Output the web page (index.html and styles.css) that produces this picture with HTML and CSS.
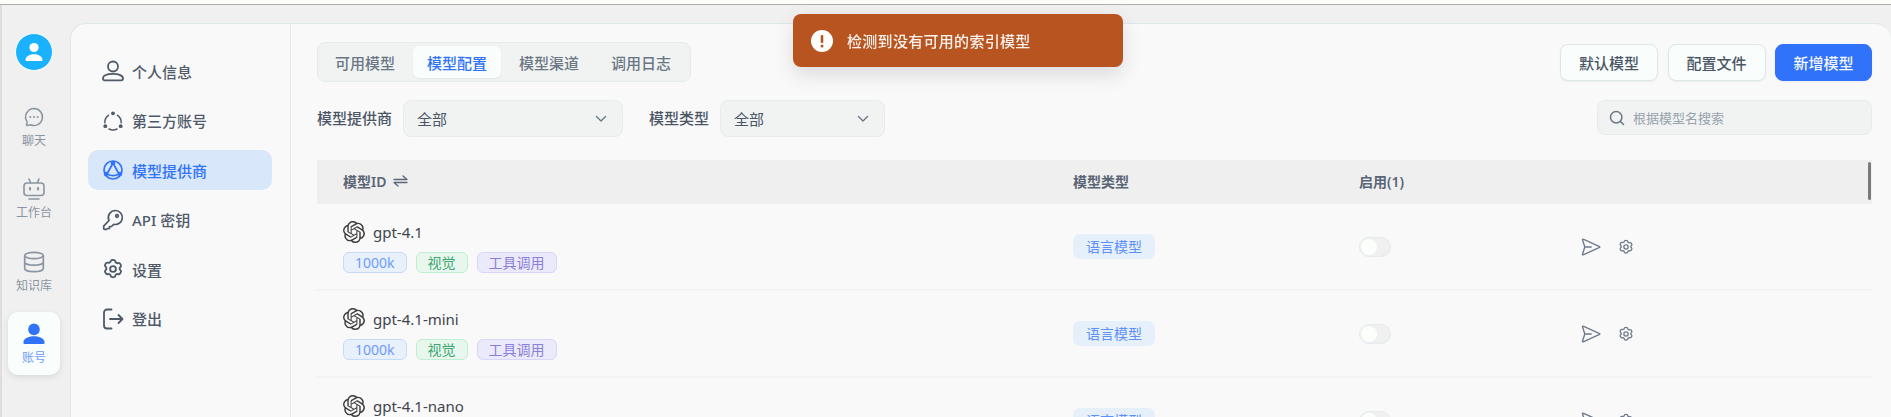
FILE: index.html
```html
<!DOCTYPE html>
<html lang="zh-CN">
<head>
    <meta charset="UTF-8">
    <meta name="viewport" content="width=device-width, initial-scale=1.0">
    <title>模型配置</title>
    <link rel="stylesheet" href="styles.css">
</head>
<body>
    <svg class="icon-defs" width="0" height="0">
        <symbol id="i-openai" viewBox="0 0 24 24">
            <path fill="currentColor" d="M22.2819 9.8211a5.9847 5.9847 0 0 0-.5157-4.9108 6.0462 6.0462 0 0 0-6.5098-2.9A6.0651 6.0651 0 0 0 4.9807 4.1818a5.9847 5.9847 0 0 0-3.9977 2.9 6.0462 6.0462 0 0 0 .7427 7.0966 5.98 5.98 0 0 0 .511 4.9107 6.051 6.051 0 0 0 6.5146 2.9001A5.9847 5.9847 0 0 0 13.2599 24a6.0557 6.0557 0 0 0 5.7718-4.2058 5.9894 5.9894 0 0 0 3.9977-2.9001 6.0557 6.0557 0 0 0-.7475-7.0729zm-9.022 12.6081a4.4755 4.4755 0 0 1-2.8764-1.0408l.1419-.0804 4.7783-2.7582a.7948.7948 0 0 0 .3927-.6813v-6.7369l2.02 1.1686a.071.071 0 0 1 .038.052v5.5826a4.504 4.504 0 0 1-4.4945 4.4944zm-9.6607-4.1254a4.4708 4.4708 0 0 1-.5346-3.0137l.142.0852 4.783 2.7582a.7712.7712 0 0 0 .7806 0l5.8428-3.3685v2.3324a.0804.0804 0 0 1-.0332.0615L9.74 19.9502a4.4992 4.4992 0 0 1-6.1408-1.6464zM2.3408 7.8956a4.485 4.485 0 0 1 2.3655-1.9728V11.6a.7664.7664 0 0 0 .3879.6765l5.8144 3.3543-2.0201 1.1685a.0757.0757 0 0 1-.071 0l-4.8303-2.7865A4.504 4.504 0 0 1 2.3408 7.872zm16.5963 3.8558L13.1038 8.364 15.1192 7.2a.0757.0757 0 0 1 .071 0l4.8303 2.7913a4.4944 4.4944 0 0 1-.6765 8.1042v-5.6772a.79.79 0 0 0-.407-.667zm2.0107-3.0231l-.142-.0852-4.7735-2.7818a.7759.7759 0 0 0-.7854 0L9.409 9.2297V6.8974a.0662.0662 0 0 1 .0284-.0615l4.8303-2.7866a4.4992 4.4992 0 0 1 6.6802 4.66zM8.3065 12.863l-2.02-1.1638a.0804.0804 0 0 1-.038-.0567V6.0742a4.4992 4.4992 0 0 1 7.3757-3.4537l-.142.0805L8.704 5.459a.7948.7948 0 0 0-.3927.6813zm1.0976-2.3654l2.602-1.4998 2.6069 1.4998v2.9994l-2.5974 1.4997-2.6067-1.4997Z"/>
        </symbol>
        <symbol id="i-send" viewBox="0 0 20 20">
            <path fill="none" stroke="currentColor" stroke-width="1.4" stroke-linejoin="round" stroke-linecap="round" d="M2.2 2.2 18.6 9.6a.5.5 0 0 1 0 .8L2.2 17.8a.5.5 0 0 1-.7-.6L3.8 10 1.500 2.800a.5.5 0 0 1 .7-.6ZM3.800 10h6.400"/>
        </symbol>
        <symbol id="i-gear" viewBox="0 0 24 24">
            <g fill="none" stroke="currentColor" stroke-width="2" stroke-linejoin="round">
                <path d="M9.600 3.300a1.500 1.500 0 0 1 1-.9l.9-.2a2 2 0 0 1 1 0l.9.2a1.500 1.500 0 0 1 1 .9l.5 1.500 1.500.9 1.600-.3a1.500 1.500 0 0 1 1.300.4l.6.7a2 2 0 0 1 .5.8l.3.9a1.500 1.500 0 0 1-.3 1.300l-1.100 1.200v1.700l1.100 1.200a1.500 1.500 0 0 1 .3 1.300l-.3.9a2 2 0 0 1-.5.8l-.6.7a1.500 1.500 0 0 1-1.300.4l-1.600-.3-1.500.9-.5 1.500a1.500 1.500 0 0 1-1 .9l-.9.2a2 2 0 0 1-1 0l-.9-.2a1.500 1.500 0 0 1-1-.9l-.5-1.500-1.500-.9-1.600.3a1.500 1.500 0 0 1-1.300-.4l-.6-.7a2 2 0 0 1-.5-.8l-.3-.9a1.500 1.500 0 0 1 .3-1.300l1.100-1.200v-1.700L3.600 9.100a1.500 1.500 0 0 1-.3-1.300l.3-.9a2 2 0 0 1 .5-.8l.6-.7A1.500 1.500 0 0 1 6 5l1.600.3 1.500-.9Z"/>
                <circle cx="12" cy="12" r="3.200"/>
            </g>
        </symbol>
    </svg>

    <div class="window-top"></div>

    <div class="app">
        <div class="rail">
            <div class="avatar">
                <svg width="24" height="24" viewBox="0 0 24 24" fill="#fff"><circle cx="12" cy="7.500" r="4.600"/><path d="M3.500 20.200c0-3.600 3.600-6 8.500-6s8.500 2.400 8.500 6c0 .5-.4.8-.9.8H4.400c-.5 0-.9-.3-.9-.8Z"/></svg>
            </div>
            <div class="rail-item">
                <svg width="22" height="22" viewBox="0 0 22 22" fill="none" stroke="currentColor" stroke-width="1.500" stroke-linejoin="round"><path d="M11 2.500a8.500 8.500 0 1 1-3.600 16.200l-3.200.8a.6.6 0 0 1-.7-.8l.7-2.800A8.500 8.500 0 0 1 11 2.500Z"/><g fill="currentColor" stroke="none"><circle cx="7.300" cy="11" r="1"/><circle cx="11" cy="11" r="1"/><circle cx="14.700" cy="11" r="1"/></g></svg>
                <span>聊天</span>
            </div>
            <div class="rail-item">
                <svg width="22" height="22" viewBox="0 0 22 22" fill="none" stroke="currentColor" stroke-width="1.600" stroke-linecap="round" stroke-linejoin="round"><rect x="1" y="5" width="20" height="12.500" rx="3"/><path d="M6 1l1.500 3.500M16 1l-1.500 3.500M6 21h10"/><path d="M7 10v1.500M15 10v1.500" stroke-width="2.200"/></svg>
                <span>工作台</span>
            </div>
            <div class="rail-item">
                <svg width="22" height="22" viewBox="0 0 22 22" fill="none" stroke="currentColor" stroke-width="1.700"><ellipse cx="11" cy="4.500" rx="9.300" ry="3.200"/><path d="M1.700 4.500v13c0 1.800 4.200 3.200 9.300 3.200s9.300-1.400 9.300-3.200v-13M1.700 11c0 1.800 4.200 3.200 9.300 3.200s9.300-1.400 9.300-3.200"/></svg>
                <span>知识库</span>
            </div>
            <div class="rail-item active">
                <svg width="22" height="22" viewBox="0 0 22 22" fill="currentColor"><circle cx="11" cy="6.400" r="5.800"/><path d="M.4 19.500c0-3.800 4.700-6.200 10.600-6.200s10.600 2.400 10.600 6.200c0 1-.6 1.500-1.500 1.500H1.900c-.9 0-1.500-.5-1.500-1.500Z"/></svg>
                <span>账号</span>
            </div>
        </div>

        <div class="panel">
            <div class="menu">
                <a class="menu-item">
                    <svg width="22" height="22" viewBox="0 0 22 22" fill="none" stroke="currentColor" stroke-width="1.800"><circle cx="11" cy="6.500" r="5"/><path d="M1 18.500c0-2.800 4-4.600 10-4.600s10 1.800 10 4.600c0 1.200-.7 1.800-1.800 1.800H2.800C1.700 20.300 1 19.700 1 18.500Z"/></svg>
                    个人信息
                </a>
                <a class="menu-item">
                    <svg width="22" height="22" viewBox="0 0 22 22" fill="none" stroke="currentColor" stroke-width="1.500" stroke-linecap="round"><path d="M6.500 5.300A8.600 8.600 0 0 0 2.800 12.800M15.500 5.300a8.600 8.600 0 0 1 3.700 7.500M7 19a8.600 8.600 0 0 0 8 0"/><g fill="currentColor" stroke="none"><circle cx="11" cy="3.300" r="1.900"/><circle cx="3.300" cy="16.200" r="1.900"/><circle cx="18.700" cy="16.200" r="1.900"/></g></svg>
                    第三方账号
                </a>
                <a class="menu-item active">
                    <svg width="22" height="22" viewBox="0 0 22 22" fill="none" stroke="currentColor" stroke-width="1.700" stroke-linejoin="round"><circle cx="11" cy="11" r="9"/><path d="M11 4 5 15c3.600 2 8.400 2 12 0Z"/><g fill="currentColor" stroke="none"><circle cx="11" cy="4" r="2.300"/><circle cx="4" cy="15" r="2.200"/><circle cx="18" cy="15" r="2.200"/></g></svg>
                    模型提供商
                </a>
                <a class="menu-item">
                    <svg width="22" height="22" viewBox="0 0 22 22" fill="none" stroke="currentColor" stroke-width="1.700" stroke-linejoin="round" stroke-linecap="round"><path d="M13.500 1.500a7 7 0 1 1-1.800 13.800L9.500 17.500H7.500v2H5.500l-.7.800H2.500a.8.800 0 0 1-.8-.8v-2.300L7 11.500a7 7 0 0 1 6.500-10Z"/><circle cx="15" cy="7" r="1.300"/></svg>
                    API 密钥
                </a>
                <a class="menu-item">
                    <svg width="22" height="22" viewBox="0 0 24 24"><use href="#i-gear"/></svg>
                    设置
                </a>
                <a class="menu-item">
                    <svg width="22" height="22" viewBox="0 0 22 22" fill="none" stroke="currentColor" stroke-width="1.800" stroke-linecap="round" stroke-linejoin="round"><path d="M9.500 1.500H5a3 3 0 0 0-3 3v13a3 3 0 0 0 3 3h4.500M8 11h12.500M16.500 7l4 4-4 4"/></svg>
                    登出
                </a>
            </div>

            <div class="content">
                <div class="toolbar">
                    <div class="tabs">
                        <div class="tab">可用模型</div>
                        <div class="tab active">模型配置</div>
                        <div class="tab">模型渠道</div>
                        <div class="tab">调用日志</div>
                    </div>
                    <div class="actions">
                        <button class="btn">默认模型</button>
                        <button class="btn">配置文件</button>
                        <button class="btn primary">新增模型</button>
                    </div>
                </div>

                <div class="filters">
                    <span class="filter-label">模型提供商</span>
                    <div class="select provider">全部<svg width="14" height="14" viewBox="0 0 14 14" fill="none" stroke="currentColor" stroke-width="1.400" stroke-linecap="round" stroke-linejoin="round"><path d="M2.500 4.500 7 9l4.500-4.500"/></svg></div>
                    <span class="filter-label second">模型类型</span>
                    <div class="select type">全部<svg width="14" height="14" viewBox="0 0 14 14" fill="none" stroke="currentColor" stroke-width="1.400" stroke-linecap="round" stroke-linejoin="round"><path d="M2.500 4.500 7 9l4.500-4.500"/></svg></div>
                    <div class="search">
                        <svg width="16" height="16" viewBox="0 0 16 16" fill="none" stroke="currentColor" stroke-width="1.500" stroke-linecap="round"><circle cx="7.200" cy="7.200" r="5.700"/><path d="m11.500 11.500 3 3"/></svg>
                        根据模型名搜索
                    </div>
                </div>

                <div class="table">
                    <div class="table-head">
                        <div class="col-id">模型ID
                            <svg width="15" height="12" viewBox="0 0 15 12" fill="none" stroke="currentColor" stroke-width="1.300" stroke-linecap="round" stroke-linejoin="round"><path d="M1 4.500h13L10 1M14 7.500H1L5 11"/></svg>
                        </div>
                        <div>模型类型</div>
                        <div>启用(1)</div>
                        <div></div>
                        <span class="scroll-thumb"></span>
                    </div>

                    <div class="table-row">
                        <div class="col-id">
                            <div class="model-name"><svg width="22" height="22" viewBox="0 0 24 24"><use href="#i-openai"/></svg>gpt-4.1</div>
                            <div class="tags"><span class="tag blue">1000k</span><span class="tag green">视觉</span><span class="tag purple">工具调用</span></div>
                        </div>
                        <div><span class="type-tag">语言模型</span></div>
                        <div><span class="switch"></span></div>
                        <div class="row-actions"><svg width="20" height="20" viewBox="0 0 20 20"><use href="#i-send"/></svg><svg width="16" height="16" viewBox="0 0 24 24"><use href="#i-gear"/></svg></div>
                    </div>

                    <div class="table-row">
                        <div class="col-id">
                            <div class="model-name"><svg width="22" height="22" viewBox="0 0 24 24"><use href="#i-openai"/></svg>gpt-4.1-mini</div>
                            <div class="tags"><span class="tag blue">1000k</span><span class="tag green">视觉</span><span class="tag purple">工具调用</span></div>
                        </div>
                        <div><span class="type-tag">语言模型</span></div>
                        <div><span class="switch"></span></div>
                        <div class="row-actions"><svg width="20" height="20" viewBox="0 0 20 20"><use href="#i-send"/></svg><svg width="16" height="16" viewBox="0 0 24 24"><use href="#i-gear"/></svg></div>
                    </div>

                    <div class="table-row">
                        <div class="col-id">
                            <div class="model-name"><svg width="22" height="22" viewBox="0 0 24 24"><use href="#i-openai"/></svg>gpt-4.1-nano</div>
                            <div class="tags"><span class="tag blue">1000k</span><span class="tag green">视觉</span><span class="tag purple">工具调用</span></div>
                        </div>
                        <div><span class="type-tag">语言模型</span></div>
                        <div><span class="switch"></span></div>
                        <div class="row-actions"><svg width="20" height="20" viewBox="0 0 20 20"><use href="#i-send"/></svg><svg width="16" height="16" viewBox="0 0 24 24"><use href="#i-gear"/></svg></div>
                    </div>
                </div>
            </div>
        </div>
    </div>

    <div class="toast">
        <svg width="22" height="22" viewBox="0 0 22 22"><circle cx="11" cy="11" r="11" fill="#fff"/><rect x="9.700" y="5" width="2.600" height="8" rx="1" fill="#b8541f"/><circle cx="11" cy="16" r="1.500" fill="#b8541f"/></svg>
        检测到没有可用的索引模型
    </div>
</body>
</html>
```

FILE: styles.css
```css
* {
    box-sizing: border-box;
}

html, body {
    height: 100%;
}

body {
    margin: 0;
    font-family: "Noto Sans", "Noto Sans CJK SC", sans-serif;
    font-size: 15px;
    background-color: #f0f0f0;
    color: #4a5565;
    display: flex;
    flex-direction: column;
    overflow: hidden;
}

.icon-defs {
    position: absolute;
}

.window-top {
    height: 5px;
    flex-shrink: 0;
    background-color: #fbfdf9;
    border-bottom: 1px solid #adadad;
}

.app {
    flex: 1;
    display: flex;
    border-left: 2px solid #dedede;
    min-height: 0;
}

/* left rail */
.rail {
    width: 68px;
    flex-shrink: 0;
    display: flex;
    flex-direction: column;
    align-items: center;
    padding: 28px 4px 0 0;
    gap: 9.6px;
}

.avatar {
    width: 38px;
    height: 38px;
    border-radius: 50%;
    border: 1px solid #fff;
    background-color: #1ab2ff;
    display: flex;
    align-items: center;
    justify-content: center;
    margin-bottom: 14px;
}

.rail-item {
    width: 52px;
    height: 63px;
    padding-top: 11px;
    border-radius: 10px;
    display: flex;
    flex-direction: column;
    align-items: center;
    gap: 4px;
    color: #8b95a1;
    font-size: 12px;
    line-height: 18px;
}

.rail-item.active {
    background-color: #f9fdfb;
    color: #3072fa;
    box-shadow: 0 2px 6px rgba(0, 0, 0, 0.1);
}

.rail-item.active span {
    color: #6f9dfb;
}

/* main panel */
.panel {
    flex: 1;
    display: flex;
    margin-top: 18px;
    min-width: 0;
    background-color: #f9f9f9;
    border-top: 1px solid #dfe8ea;
    border-left: 1px solid #dfe8ea;
    border-radius: 16px 16px 0 0;
}

.menu {
    width: 220px;
    flex-shrink: 0;
    padding: 27px 18px 0 17px;
    border-right: 1px solid #e3e9ea;
    display: flex;
    flex-direction: column;
    gap: 9.5px;
}

.menu-item {
    height: 40px;
    padding-left: 14px;
    display: flex;
    align-items: center;
    gap: 8px;
    border-radius: 10px;
    color: #4f5a69;
    font-weight: 500;
}

.menu-item.active {
    background-color: #d8e7f9;
    color: #3072fa;
}

.content {
    flex: 1;
    min-width: 0;
    padding: 18px 19px 0 26px;
}

.toolbar {
    display: flex;
    justify-content: space-between;
    align-items: center;
}

.tabs {
    height: 40px;
    padding: 3px 5px 3px 3px;
    display: flex;
    background-color: #f0f3f2;
    border: 1px solid #e6ecec;
    border-radius: 8px;
}

.tab {
    width: 88px;
    display: flex;
    align-items: center;
    justify-content: center;
    border-radius: 6px;
    color: #6b7684;
    margin-right: 4px;
    font-weight: 500;
}

.tab:last-child {
    margin-right: 0;
}

.tab.active {
    background-color: #f9fdfb;
    color: #3072fa;
    box-shadow: 0 1px 2px rgba(0, 0, 0, 0.06);
}

.actions {
    display: flex;
    gap: 9.5px;
}

.btn {
    width: 98px;
    height: 37px;
    font-family: inherit;
    font-size: 15px;
    font-weight: 500;
    color: #4a5565;
    background-color: #f9fdfb;
    border: 1px solid #dde7e8;
    border-radius: 8px;
    box-shadow: 0 1px 2px rgba(0, 0, 0, 0.05);
}

.btn.primary {
    width: 97px;
    background-color: #3072fa;
    border-color: #3072fa;
    color: #f5f8ff;
}

.filters {
    margin-top: 18px;
    display: flex;
    align-items: flex-start;
}

.filter-label {
    line-height: 37px;
    margin-right: 11px;
    font-weight: 500;
}

.filter-label.second {
    margin-left: 26px;
}

.select {
    height: 37px;
    padding: 0 14px 0 13px;
    display: flex;
    align-items: center;
    justify-content: space-between;
    background-color: #f0f3f2;
    border: 1px solid #e6ecec;
    border-radius: 8px;
}

.select svg {
    color: #6b7684;
}

.select.provider {
    width: 220px;
}

.select.type {
    width: 165px;
}

.search {
    width: 275px;
    height: 35px;
    margin-left: auto;
    padding-left: 11px;
    display: flex;
    align-items: center;
    gap: 8px;
    background-color: #f0f3f2;
    border: 1px solid #e6ecec;
    border-radius: 8px;
    font-size: 13px;
    color: #98a2ad;
}

.search svg {
    color: #6b7684;
}

/* table */
.table {
    margin-top: 23px;
}

.table-head,
.table-row {
    display: grid;
    grid-template-columns: 730px 286px 222px 1fr;
    padding-left: 26px;
    align-items: center;
}

.table-head {
    position: relative;
    height: 44px;
    padding-bottom: 2px;
    background-color: #efefef;
    font-size: 14px;
    font-weight: 600;
    color: #5a6575;
}

.table-head .col-id {
    display: flex;
    align-items: center;
    gap: 7px;
}

.scroll-thumb {
    position: absolute;
    top: 2px;
    right: 1px;
    width: 3px;
    height: 38px;
    background-color: #7a7a7a;
    border-radius: 2px;
}

.table-row {
    height: 87px;
    border-bottom: 2px solid #f1f4f3;
}

.model-name {
    display: flex;
    align-items: center;
    gap: 8px;
    color: #3f4550;
    font-size: 15px;
    line-height: 22px;
}

.model-name svg {
    color: #3d3d3d;
}

.tags {
    margin-top: 9px;
    display: flex;
    gap: 9px;
}

.tag {
    height: 21px;
    padding: 0 11px;
    display: flex;
    align-items: center;
    border: 1px solid;
    border-radius: 6px;
    font-size: 14px;
}

.tag.blue {
    background-color: #e8f0fb;
    border-color: #c6dafb;
    color: #6f9bfa;
}

.tag.green {
    background-color: #e8f7ee;
    border-color: #bdf0d2;
    color: #3fa673;
}

.tag.purple {
    background-color: #eaeafa;
    border-color: #d8d6fa;
    color: #8a80dc;
}

.type-tag {
    display: inline-block;
    padding: 0 13px;
    line-height: 25px;
    background-color: #e6f0fb;
    border-radius: 7px;
    font-size: 14px;
    color: #5f90fa;
}

.switch {
    display: block;
    position: relative;
    width: 32px;
    height: 20px;
    background-color: #f0f0f0;
    border: 1px solid #e2ebef;
    border-radius: 10px;
}

.switch::after {
    content: "";
    position: absolute;
    left: 1px;
    top: 1px;
    width: 16px;
    height: 16px;
    background-color: #fbfefb;
    border-radius: 50%;
}

.row-actions {
    display: flex;
    align-items: center;
    gap: 17px;
    color: #6e7b8c;
}

/* toast over the page */
.toast {
    position: fixed;
    top: 14px;
    left: 793px;
    width: 330px;
    height: 53px;
    padding-left: 18px;
    display: flex;
    align-items: center;
    gap: 14px;
    background-color: #b8541f;
    border-radius: 8px;
    color: #f9f1ec;
    font-size: 15px;
    font-weight: 500;
    letter-spacing: 0.3px;
    box-shadow: 0 8px 20px rgba(0, 0, 0, 0.12);
}
```
